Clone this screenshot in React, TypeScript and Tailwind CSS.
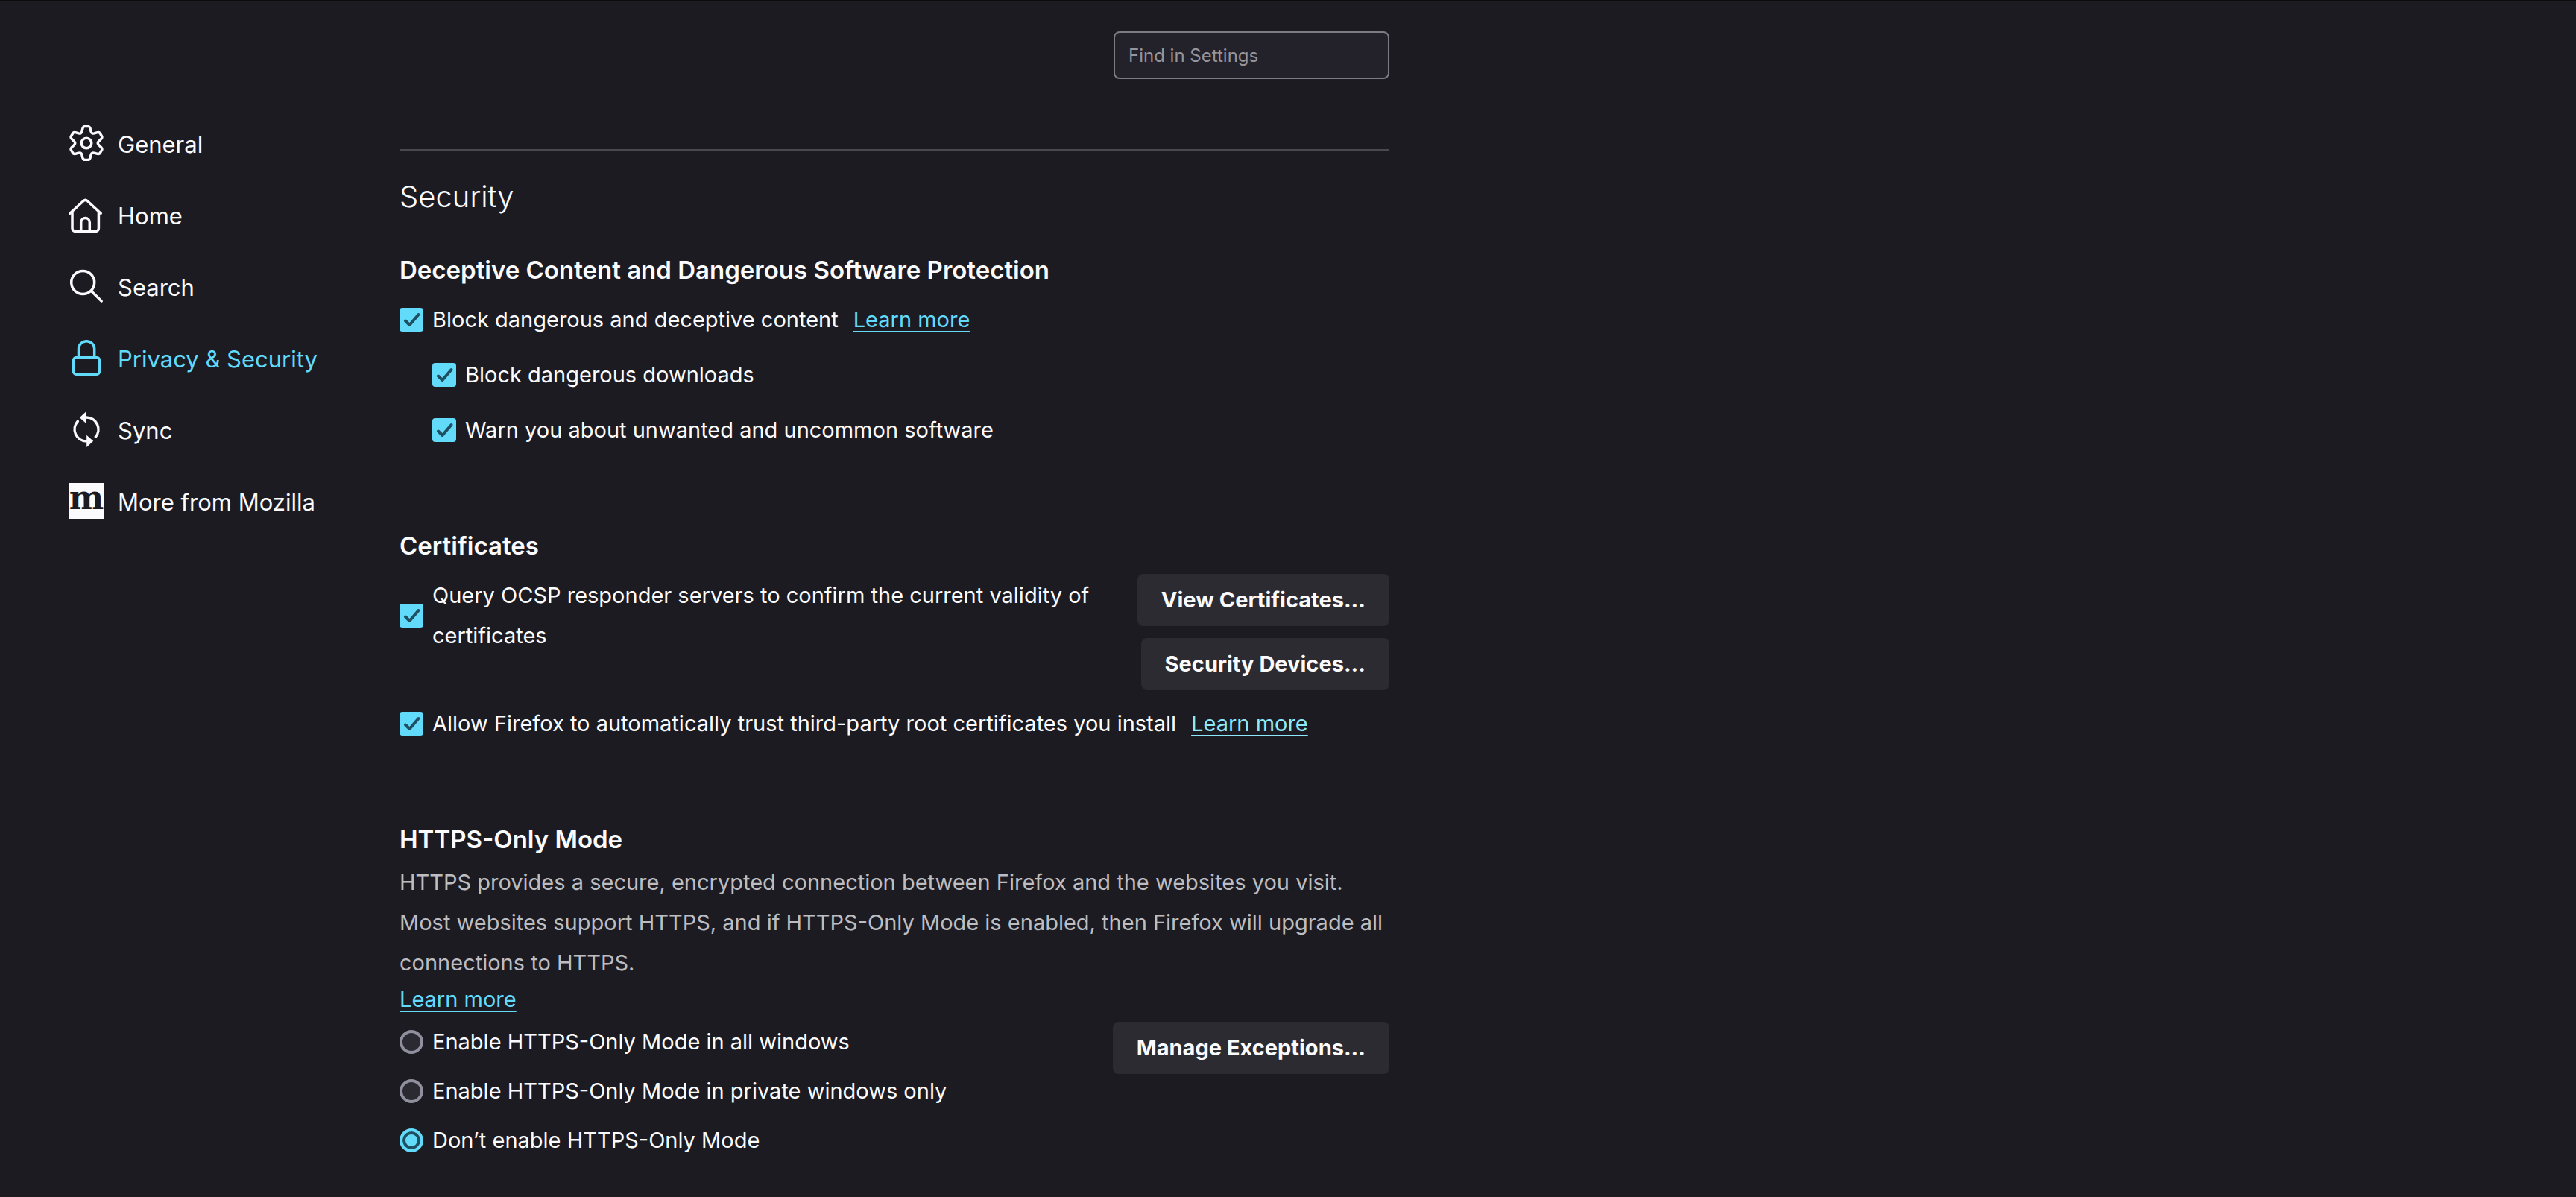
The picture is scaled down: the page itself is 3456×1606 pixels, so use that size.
import type { ReactNode } from "react";

const toothPoints: [string, number[][]][] = [
  ["C", [[-6.5, -13.8], [-6.3, -15], [-6, -16]]],
  ["L", [[-5, -20]]],
  ["Q", [[-4.3, -22.4], [-2.2, -22.4]]],
  ["L", [[2.2, -22.4]]],
  ["Q", [[4.3, -22.4], [5, -20]]],
  ["L", [[6, -16]]],
  ["C", [[6.3, -15], [6.5, -13.8], [7.6, -13.2]]],
];

function rotated([x, y]: number[], degrees: number) {
  const a = (degrees * Math.PI) / 180;
  const rx = 24 + x * Math.cos(a) - y * Math.sin(a);
  const ry = 24 + x * Math.sin(a) + y * Math.cos(a);
  return `${rx.toFixed(2)} ${ry.toFixed(2)}`;
}

const gearPath =
  `M${rotated([-7.6, -13.2], 0)}` +
  [0, 60, 120, 180, 240, 300]
    .map((deg) =>
      toothPoints.map(([cmd, pts]) => cmd + pts.map((p) => rotated(p, deg)).join(" ")).join("")
    )
    .join("") +
  "Z";

function Icon({ children }: { children: ReactNode }) {
  return (
    <svg
      viewBox="0 0 48 48"
      className="size-12 shrink-0"
      fill="none"
      stroke="currentColor"
      strokeWidth="3.5"
      strokeLinecap="round"
      strokeLinejoin="round"
      aria-hidden="true"
    >
      {children}
    </svg>
  );
}

const navItems = [
  {
    label: "General",
    icon: (
      <Icon>
        <path d={gearPath} />
        <circle cx="24" cy="24" r="6.8" />
      </Icon>
    ),
  },
  {
    label: "Home",
    icon: (
      <Icon>
        <path d="M1.9 22.2 20 5.5q2.6-2.2 5.2 0L43.2 22.2" />
        <path d="M5 20.5V42.2a4.2 4.2 0 0 0 4.2 4.2H36.2a4.2 4.2 0 0 0 4.2-4.2V20.5" />
        <path d="M16.7 46V34.4a5.8 5.8 0 0 1 11.6 0V46" />
      </Icon>
    ),
  },
  {
    label: "Search",
    icon: (
      <Icon>
        <circle cx="19.2" cy="19" r="15.5" />
        <path d="M30.5 30.4 44.2 44" />
      </Icon>
    ),
  },
  {
    label: "Privacy & Security",
    active: true,
    icon: (
      <Icon>
        <rect x="6.3" y="23.3" width="35.5" height="23" rx="4.5" />
        <path d="M13.5 23V12.3a10.6 10.6 0 0 1 21.2 0V23" />
      </Icon>
    ),
  },
  {
    label: "Sync",
    icon: (
      <Icon>
        <path d="M24 8a16 16 0 0 1 12.3 26.2M24 40A16 16 0 0 1 12.3 13.2" />
        <path d="M14.8 8.3 23.8 0v16.3zM33.2 39.7 24.2 48V31.7z" fill="currentColor" stroke="none" />
      </Icon>
    ),
  },
  {
    label: "More from Mozilla",
    icon: (
      <span
        aria-hidden="true"
        className="flex size-12 shrink-0 items-center justify-center bg-[#fbfbfe] pb-2 font-['DejaVu_Serif',serif] text-[44px] leading-10 font-bold text-[#1c1b22]"
      >
        m
      </span>
    ),
  },
];

function Check({ children, id }: { children: ReactNode; id: string }) {
  return (
    <div className="flex items-center gap-3">
      <span className="grid size-8 shrink-0">
        <input
          id={id}
          type="checkbox"
          defaultChecked
          className="peer col-start-1 row-start-1 size-8 appearance-none rounded border-2 border-[#8f8f9d] bg-[#2b2a33] checked:border-[#62dbfb] checked:bg-[#62dbfb]"
        />
        <svg
          viewBox="0 0 32 32"
          className="pointer-events-none invisible col-start-1 row-start-1 size-8 peer-checked:visible"
          fill="none"
          stroke="#1f4f60"
          strokeWidth="4"
          strokeLinecap="round"
          strokeLinejoin="round"
          aria-hidden="true"
        >
          <path d="M8 17.5 13.5 23 25.5 9" />
        </svg>
      </span>
      <label htmlFor={id}>{children}</label>
    </div>
  );
}

function Radio({ label, id, checked }: { label: string; id: string; checked?: boolean }) {
  return (
    <div className="flex items-center gap-3">
      <input
        id={id}
        type="radio"
        name="https-only"
        defaultChecked={checked}
        className="size-8 shrink-0 appearance-none rounded-full border-4 border-[#8f8f9d] bg-[#2b2a33] checked:border-[#62dbfb] checked:bg-[#62dbfb] checked:shadow-[inset_0_0_0_4px_#1f4f60]"
      />
      <label htmlFor={id}>{label}</label>
    </div>
  );
}

function LearnMore({ hovered }: { hovered?: boolean }) {
  return (
    <a
      href="#learn-more"
      className={
        hovered
          ? "text-[#8ee8fc] underline decoration-2 underline-offset-[5px]"
          : "text-[#62dbfb] underline decoration-2 underline-offset-[5px]"
      }
    >
      Learn more
    </a>
  );
}

function Button({ children }: { children: ReactNode }) {
  return (
    <button type="button" className="h-[70px] rounded-lg bg-[#2c2b31] px-8 font-bold whitespace-nowrap">
      {children}
    </button>
  );
}

function Heading({ children }: { children: ReactNode }) {
  return <h2 className="text-[33px] leading-[48px] font-semibold">{children}</h2>;
}

export default function App() {
  return (
    <div className="flex min-h-screen border-t-2 border-[#0c0c0d] bg-[#1c1b22] font-[Inter,sans-serif] text-[29px] leading-[54px] text-[#fbfbfe]">
      <nav className="w-[536px] shrink-0 pt-[166px] pl-[92px]">
        <ul className="flex flex-col gap-12">
          {navItems.map((item) => (
            <li key={item.label}>
              <a
                href="#category"
                className={
                  item.active
                    ? "flex h-12 items-center gap-[18px] text-[31px] leading-[44px] text-[#62dbfb]"
                    : "flex h-12 items-center gap-[18px] text-[31px] leading-[44px]"
                }
              >
                {item.icon}
                <span className="pt-1">{item.label}</span>
              </a>
            </li>
          ))}
        </ul>
      </nav>

      <main className="w-full max-w-[1328px] pt-10">
        <div className="flex justify-end">
          <input
            type="search"
            aria-label="Find in Settings"
            placeholder="Find in Settings"
            className="h-16 w-[370px] rounded-lg border-2 border-[#7d7c83] bg-[#23222b] px-[18px] text-2xl placeholder:text-[#96959c]"
          />
        </div>

        <hr className="mt-[94px] border-t-2 border-[#4a494f]" />
        <h1 className="mt-[34px] text-[40px] leading-[56px] font-light">Security</h1>

        <section className="mt-[46px]">
          <Heading>Deceptive Content and Dangerous Software Protection</Heading>
          <div className="mt-4 flex flex-col gap-5">
            <div className="flex items-center gap-5">
              <Check id="block-content">Block dangerous and deceptive content</Check>
              <LearnMore />
            </div>
            <div className="flex flex-col gap-5 pl-11">
              <Check id="block-downloads">Block dangerous downloads</Check>
              <Check id="warn-software">Warn you about unwanted and uncommon software</Check>
            </div>
          </div>
        </section>

        <section className="mt-[104px]">
          <Heading>Certificates</Heading>
          <div className="mt-[14px] flex items-start justify-between gap-12">
            <div className="pt-0.5">
              <Check id="ocsp">
                Query OCSP responder servers to confirm the current validity of certificates
              </Check>
            </div>
            <div className="flex shrink-0 flex-col items-end gap-4">
              <Button>View Certificates...</Button>
              <Button>Security Devices...</Button>
            </div>
          </div>
          <div className="mt-[18px] flex items-center gap-5">
            <Check id="root-certs">
              Allow Firefox to automatically trust third-party root certificates you install
            </Check>
            <LearnMore hovered />
          </div>
        </section>

        <section className="mt-[104px]">
          <Heading>HTTPS-Only Mode</Heading>
          <p className="mt-[7px] text-[#bdbdc1]">
            HTTPS provides a secure, encrypted connection between Firefox and the websites you visit.
            Most websites support HTTPS, and if HTTPS-Only Mode is enabled, then Firefox will upgrade
            all connections to HTTPS.
          </p>
          <div className="leading-[44px]">
            <LearnMore />
          </div>
          <div className="mt-2 flex items-start justify-between">
            <div role="radiogroup" aria-label="HTTPS-Only Mode" className="flex flex-col gap-3">
              <Radio id="https-all" label="Enable HTTPS-Only Mode in all windows" />
              <Radio id="https-private" label="Enable HTTPS-Only Mode in private windows only" />
              <Radio id="https-off" label="Don’t enable HTTPS-Only Mode" checked />
            </div>
            <Button>Manage Exceptions...</Button>
          </div>
        </section>
      </main>
    </div>
  );
}
